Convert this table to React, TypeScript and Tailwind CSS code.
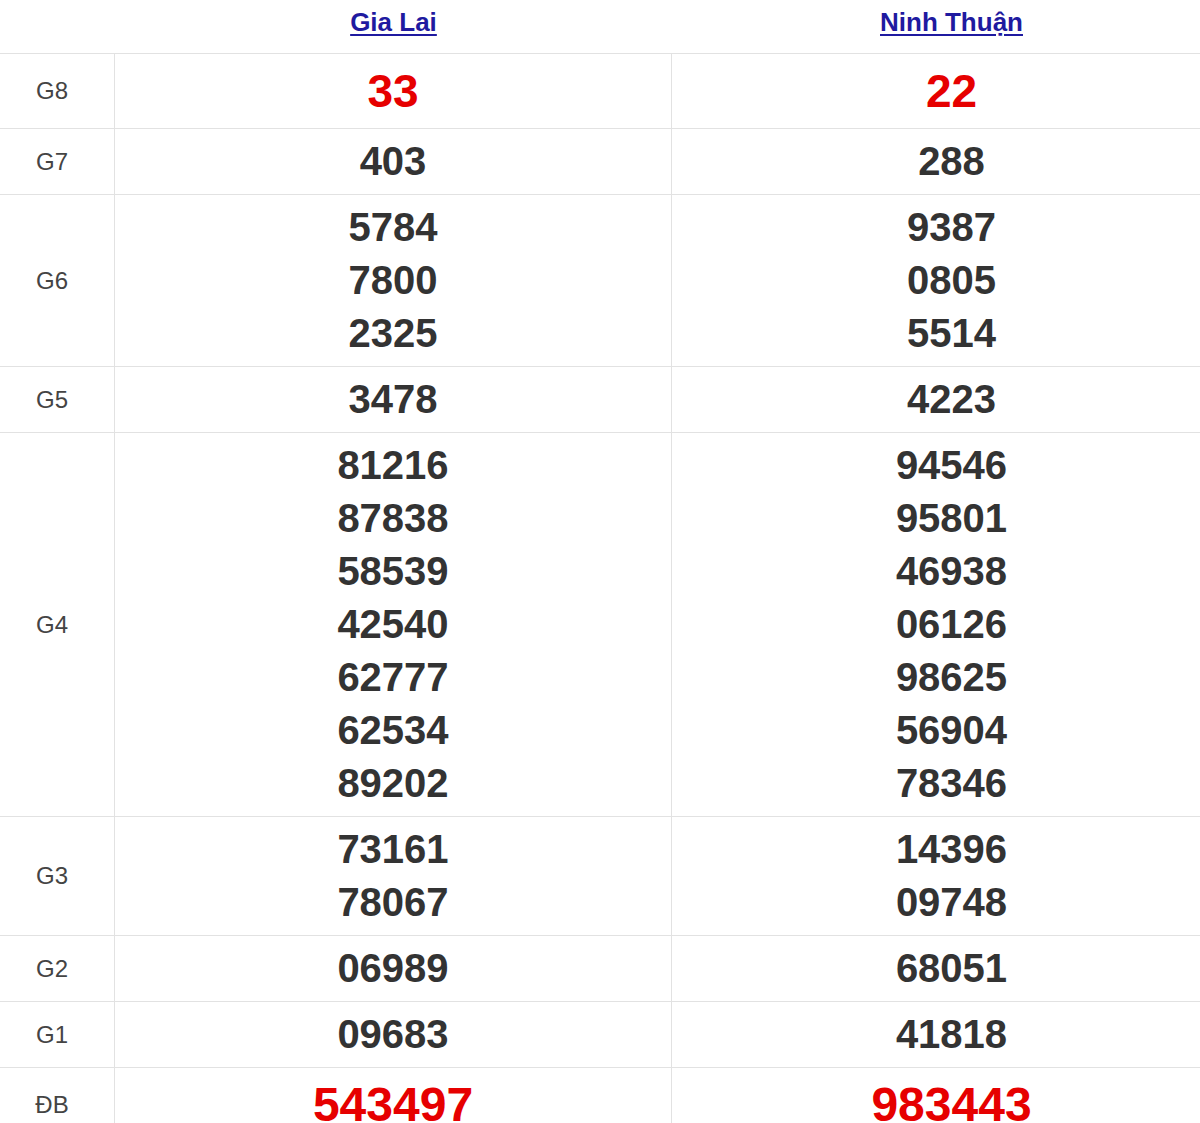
import React from "react";

type Row = { label: string; a: string[]; b: string[]; kind?: "g8" | "db" };

const rows: Row[] = [
  { label: "G8", a: ["33"], b: ["22"], kind: "g8" },
  { label: "G7", a: ["403"], b: ["288"] },
  { label: "G6", a: ["5784", "7800", "2325"], b: ["9387", "0805", "5514"] },
  { label: "G5", a: ["3478"], b: ["4223"] },
  {
    label: "G4",
    a: ["81216", "87838", "58539", "42540", "62777", "62534", "89202"],
    b: ["94546", "95801", "46938", "06126", "98625", "56904", "78346"],
  },
  { label: "G3", a: ["73161", "78067"], b: ["14396", "09748"] },
  { label: "G2", a: ["06989"], b: ["68051"] },
  { label: "G1", a: ["09683"], b: ["41818"] },
  { label: "ĐB", a: ["543497"], b: ["983443"], kind: "db" },
];

const Nums = ({ list, kind }: { list: string[]; kind?: Row["kind"] }) => {
  let cls = "text-[40px] leading-[53px] text-[#333]";
  if (kind === "g8") cls = "text-[46px] leading-[62px] text-[#e60000]";
  if (kind === "db") cls = "text-[48px] leading-[62px] text-[#e60000]";
  return (
    <div className={`flex flex-col items-center justify-center py-[6px] font-bold ${cls}`}>
      {list.map((n, i) => (
        <div key={i}>{n}</div>
      ))}
    </div>
  );
};

const App = () => {
  return (
    <div className="w-[1200px] h-[1123px] overflow-hidden bg-white font-['Liberation_Sans',Arial,sans-serif]">
      <div className="w-[1231px] grid grid-cols-[115px_557px_559px]">
        <div className="h-[54px] border-b border-[#e2e2e2]" />
        <div className="h-[54px] border-b border-[#e2e2e2] flex items-center justify-center pb-[8px]">
          <a href="#" className="text-[26px] font-bold text-[#1f1aa0] underline underline-offset-[3px] decoration-[2px]">
            Gia Lai
          </a>
        </div>
        <div className="h-[54px] border-b border-[#e2e2e2] flex items-center justify-center pb-[8px]">
          <a href="#" className="text-[26px] font-bold text-[#1f1aa0] underline underline-offset-[3px] decoration-[2px]">
            Ninh Thuận
          </a>
        </div>
        {rows.map((r) => (
          <React.Fragment key={r.label}>
            <div className="border-b border-r border-[#e2e2e2] flex items-center justify-center pr-[10px] text-[24px] text-[#444]">
              {r.label}
            </div>
            <div className="border-b border-r border-[#e2e2e2]">
              <Nums list={r.a} kind={r.kind} />
            </div>
            <div className="border-b border-[#e2e2e2]">
              <Nums list={r.b} kind={r.kind} />
            </div>
          </React.Fragment>
        ))}
      </div>
    </div>
  );
};

export default App;
